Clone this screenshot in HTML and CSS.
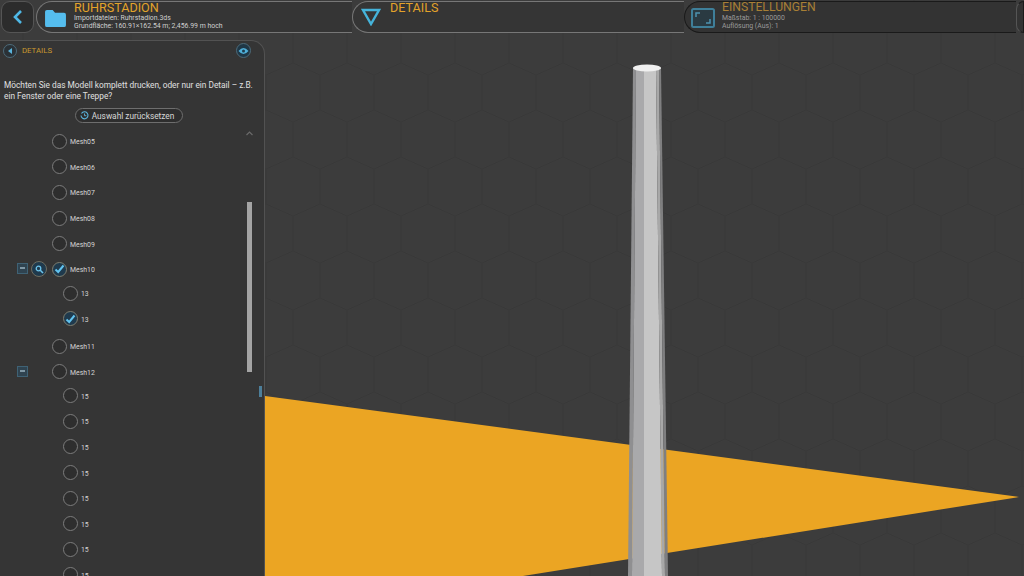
FILE: index.html
```html
<!DOCTYPE html>
<html lang="de">
<head>
<meta charset="utf-8">
<title>Ruhrstadion</title>
<link rel="stylesheet" href="styles.css">
</head>
<body>
<div class="app">
  <svg class="scene" width="1024" height="576" viewBox="0 0 1024 576">
    <defs>
      <pattern id="hex" width="54" height="94" patternUnits="userSpaceOnUse" x="50" y="75">
        <path d="M0 0V35L27 47L54 35M54 0V35M27 47V82L0 94M27 82L54 94" fill="none" stroke="#383838" stroke-width="1"/>
      </pattern>
    </defs>
    <rect width="1024" height="576" fill="#3c3c3c"/>
    <rect width="1024" height="576" fill="url(#hex)"/>
    <polygon points="265,396 1019,497 523,576 265,576" fill="#eba523"/>
    <polygon points="633,68 636,68 632,576 628,576" fill="#8f8f91"/>
    <polygon points="636,68 644,68 644,576 632,576" fill="#a9a9ab"/>
    <polygon points="644,68 656,68 662,576 644,576" fill="#c6c6c6"/>
    <polygon points="656,68 659,68 665,576 662,576" fill="#a8a8a8"/>
    <polygon points="659,68 661,68 668,576 665,576" fill="#7f7f80"/>
    <ellipse cx="647" cy="68" rx="14" ry="3.5" fill="#f0f0f0"/>
  </svg>

  <header class="topbar">
    <button class="back" type="button" aria-label="Zurück">
      <svg width="14" height="18" viewBox="0 0 14 18"><path d="M10 3L4 9L10 15" fill="none" stroke="#4fb8e6" stroke-width="2.6"/></svg>
    </button>
    <section class="tab tab-file">
      <svg class="tab-icon" width="23" height="19" viewBox="0 0 24 20"><path d="M1 3Q1 1 3 1H9L11.500 4H21Q23 4 23 6V17Q23 19 21 19H3Q1 19 1 17Z" fill="#55bdee"/></svg>
      <div class="tab-text">
        <h1>RUHRSTADION</h1>
        <p>Importdateien: Ruhrstadion.3ds</p>
        <p>Grundfläche: 160.91×162.54 m; 2,456.99 m hoch</p>
      </div>
    </section>
    <section class="tab tab-details">
      <svg class="tab-icon" width="20" height="18" viewBox="0 0 20 18"><path d="M2 2H18L10 16Z" fill="none" stroke="#45b3da" stroke-width="2.400"/></svg>
      <div class="tab-text">
        <h1>DETAILS</h1>
      </div>
    </section>
    <section class="tab tab-settings">
      <svg class="tab-icon" width="24" height="20" viewBox="0 0 24 20"><rect x="1" y="1" width="22" height="18" rx="1.500" fill="#2a3a42" stroke="#3f7f99" stroke-width="2"/><path d="M5 9V5H9M19 11V15H15" fill="none" stroke="#4d93b0" stroke-width="1.500"/></svg>
      <div class="tab-text">
        <h1>EINSTELLUNGEN</h1>
        <p>Maßstab: 1 : 100000</p>
        <p>Auflösung (Aus): 1</p>
      </div>
    </section>
    <div class="tab-end"></div>
  </header>

  <aside class="panel">
    <div class="panel-head">
      <button class="round-btn" type="button" aria-label="Zurück">
        <svg width="6" height="8" viewBox="0 0 6 8"><path d="M5 1V7L1 4Z" fill="#5ab4dc"/></svg>
      </button>
      <span class="panel-title">DETAILS</span>
      <button class="round-btn eye" type="button" aria-label="Anzeigen">
        <svg width="11" height="8" viewBox="0 0 11 8"><path d="M0.500 4Q5.500 -2 10.500 4Q5.500 10 0.500 4Z" fill="#4fb0da"/><circle cx="5.500" cy="4" r="1.500" fill="#1f3c4c"/></svg>
      </button>
    </div>
    <p class="question">Möchten Sie das Modell komplett drucken, oder nur ein Detail – z.B. ein Fenster oder eine Treppe?</p>
    <button class="reset" type="button">
      <svg width="9" height="9" viewBox="0 0 9 9"><path d="M1.500 2.500A3.500 3.500 0 1 1 1 4.500" fill="none" stroke="#5ab4dc" stroke-width="1.100"/><path d="M4.500 2.500V4.700H6.300" fill="none" stroke="#5ab4dc" stroke-width="0.900"/></svg>
      Auswahl zurücksetzen
    </button>
    <div class="tree">
      <div class="row"><span class="radio"></span><span class="label">Mesh05</span></div>
      <div class="row"><span class="radio"></span><span class="label">Mesh06</span></div>
      <div class="row"><span class="radio"></span><span class="label">Mesh07</span></div>
      <div class="row"><span class="radio"></span><span class="label">Mesh08</span></div>
      <div class="row"><span class="radio"></span><span class="label">Mesh09</span></div>
      <div class="row">
        <span class="minus"></span>
        <span class="zoom"><svg width="9" height="9" viewBox="0 0 9 9"><circle cx="3.500" cy="3.500" r="2.300" fill="none" stroke="#6cc4ec" stroke-width="1.300"/><path d="M5.300 5.300L8 8" stroke="#6cc4ec" stroke-width="1.600"/></svg></span>
        <span class="radio checked"><svg width="11" height="10" viewBox="0 0 11 10"><path d="M1.500 5.500L4.200 8L9.500 1.500" fill="none" stroke="#62c4f0" stroke-width="2"/></svg></span>
        <span class="label">Mesh10</span>
      </div>
      <div class="sub">
        <div class="row"><span class="radio"></span><span class="label">13</span></div>
        <div class="row"><span class="radio checked"><svg width="11" height="10" viewBox="0 0 11 10"><path d="M1.500 5.500L4.200 8L9.500 1.500" fill="none" stroke="#62c4f0" stroke-width="2"/></svg></span><span class="label">13</span></div>
      </div>
      <div class="row"><span class="radio"></span><span class="label">Mesh11</span></div>
      <div class="row"><span class="minus"></span><span class="radio"></span><span class="label">Mesh12</span></div>
      <div class="sub">
        <div class="row"><span class="radio"></span><span class="label">15</span></div>
        <div class="row"><span class="radio"></span><span class="label">15</span></div>
        <div class="row"><span class="radio"></span><span class="label">15</span></div>
        <div class="row"><span class="radio"></span><span class="label">15</span></div>
        <div class="row"><span class="radio"></span><span class="label">15</span></div>
        <div class="row"><span class="radio"></span><span class="label">15</span></div>
        <div class="row"><span class="radio"></span><span class="label">15</span></div>
        <div class="row"><span class="radio"></span><span class="label">15</span></div>
      </div>
    </div>
    <svg class="scroll-up" width="7" height="5" viewBox="0 0 7 5"><path d="M0.500 4L3.500 1L6.500 4" fill="none" stroke="#6a6a6a" stroke-width="1.200"/></svg>
    <div class="scroll-thumb"></div>
    <div class="grip"></div>
  </aside>
</div>
</body>
</html>
```

FILE: styles.css
```css
* { box-sizing: border-box; }
html, body { margin: 0; height: 100%; overflow: hidden; background: #3c3c3c; }
body { font-family: Roboto, "Open Sans", sans-serif; color: #d8d8d8; }
button { font: inherit; color: inherit; padding: 0; cursor: pointer; }
h1, p { margin: 0; font-weight: 400; }

.app { position: relative; width: 1024px; height: 576px; overflow: hidden; display: flex; flex-direction: column; }
.scene { position: absolute; left: 0; top: 0; }

.topbar { position: relative; display: flex; height: 33px; margin-top: 1px; flex: none; }
.back {
  width: 33px; height: 32px; margin-left: 1px; flex: none;
  display: flex; align-items: center; justify-content: center;
  background: #2c2c2c; border: 1px solid #555; border-radius: 9px;
}
.tab {
  display: flex; height: 32px; flex: none;
  background: #353535; border: 1px solid #777; border-right: 0; border-radius: 16px 0 0 16px;
}
.tab-icon { flex: none; }
.tab-text { line-height: 1; }
.tab-text h1 { font-size: 12.600px; line-height: 11px; color: #e3a32a; }
.tab-text p { font-size: 6.900px; line-height: 8px; color: #cfcfcf; }
.tab-text h1 + p { margin-top: 1px; }

.tab-file { width: 316px; margin-left: 2px; padding-left: 7px; }
.tab-file .tab-icon { margin: 7px 7px 0 0; }
.tab-details { width: 332px; padding-left: 8px; }
.tab-details .tab-icon { margin: 6px 9px 0 0; }
.tab-settings { width: 332px; background: #333; border-color: #1a1a1a; padding-left: 6px; }
.tab-settings .tab-icon { margin: 6px 7px 0 0; }
.tab-settings h1 { color: #a87f35; font-size: 12.200px; }
.tab-settings p { color: #9a9a9a; }
.tab-end { flex: 1; height: 32px; background: #333; border: 1px solid #1a1a1a; border-left-color: #555; border-radius: 16px 0 0 16px; }

.panel {
  position: relative; flex: none; width: 265px; height: 536px; margin-top: 6px;
  background: #353535; border: 1px solid #525252; border-left: 0; border-bottom: 0; border-radius: 0 14px 0 0;
  overflow: hidden;
}
.panel-head { display: flex; align-items: center; height: 19px; padding: 0 13px 0 3px; gap: 5px; }
.round-btn {
  width: 14px; height: 14px; border-radius: 50%; flex: none;
  display: flex; align-items: center; justify-content: center;
  background: #2a3136; border: 1px solid #4d6b7a;
}
.eye { width: 15px; height: 15px; background: #1f3746; margin-left: auto; }
.panel-title { font-size: 7.800px; color: #c9992f; }
.question { margin: 20px 0 0 4px; width: 256px; font-size: 8.300px; line-height: 11px; color: #e0e0e0; }
.reset {
  display: flex; align-items: center; gap: 3px; height: 15px; width: 108px; margin: 6px 0 0 75px; padding-right: 4px;
  background: #2e2e2e; border: 1px solid #6e6e6e; border-radius: 8px;
  justify-content: center; font-size: 8.300px; color: #d8d8d8; white-space: nowrap;
}
.tree { margin-top: 5.500px; }
.row { position: relative; display: flex; align-items: center; height: 25.600px; padding-left: 52px; }
.sub { margin: -1.500px 0 1.500px; }
.sub .row { padding-left: 63px; }
.radio {
  width: 15px; height: 15px; border-radius: 50%; flex: none;
  display: flex; align-items: center; justify-content: center;
  background: #2e2e2e; border: 1px solid #7c7c7c;
}
.radio.checked { background: #1f3a4d; border-color: #7e7e70; }
.label { margin: 2px 0 0 3px; font-size: 6.900px; color: #d4d4d4; }
.minus {
  position: absolute; left: 17px; top: 7px; width: 11px; height: 11px;
  background: #2f4350; border: 1px solid #3f6275;
}
.minus::after { content: ""; position: absolute; left: 2px; right: 2px; top: 3px; height: 2px; background: #7f97a5; }
.zoom {
  position: absolute; left: 31px; top: 5px; width: 16px; height: 16px; border-radius: 50%;
  display: flex; align-items: center; justify-content: center;
  background: #1f3a4d; border: 1px solid #6e6e62;
}
.scroll-up { position: absolute; left: 246px; top: 90px; }
.scroll-thumb { position: absolute; left: 247px; top: 161px; width: 5px; height: 170px; background: #a4a4a4; }
.grip { position: absolute; left: 259px; top: 345px; width: 3px; height: 11px; background: #4d7f9a; }
```
